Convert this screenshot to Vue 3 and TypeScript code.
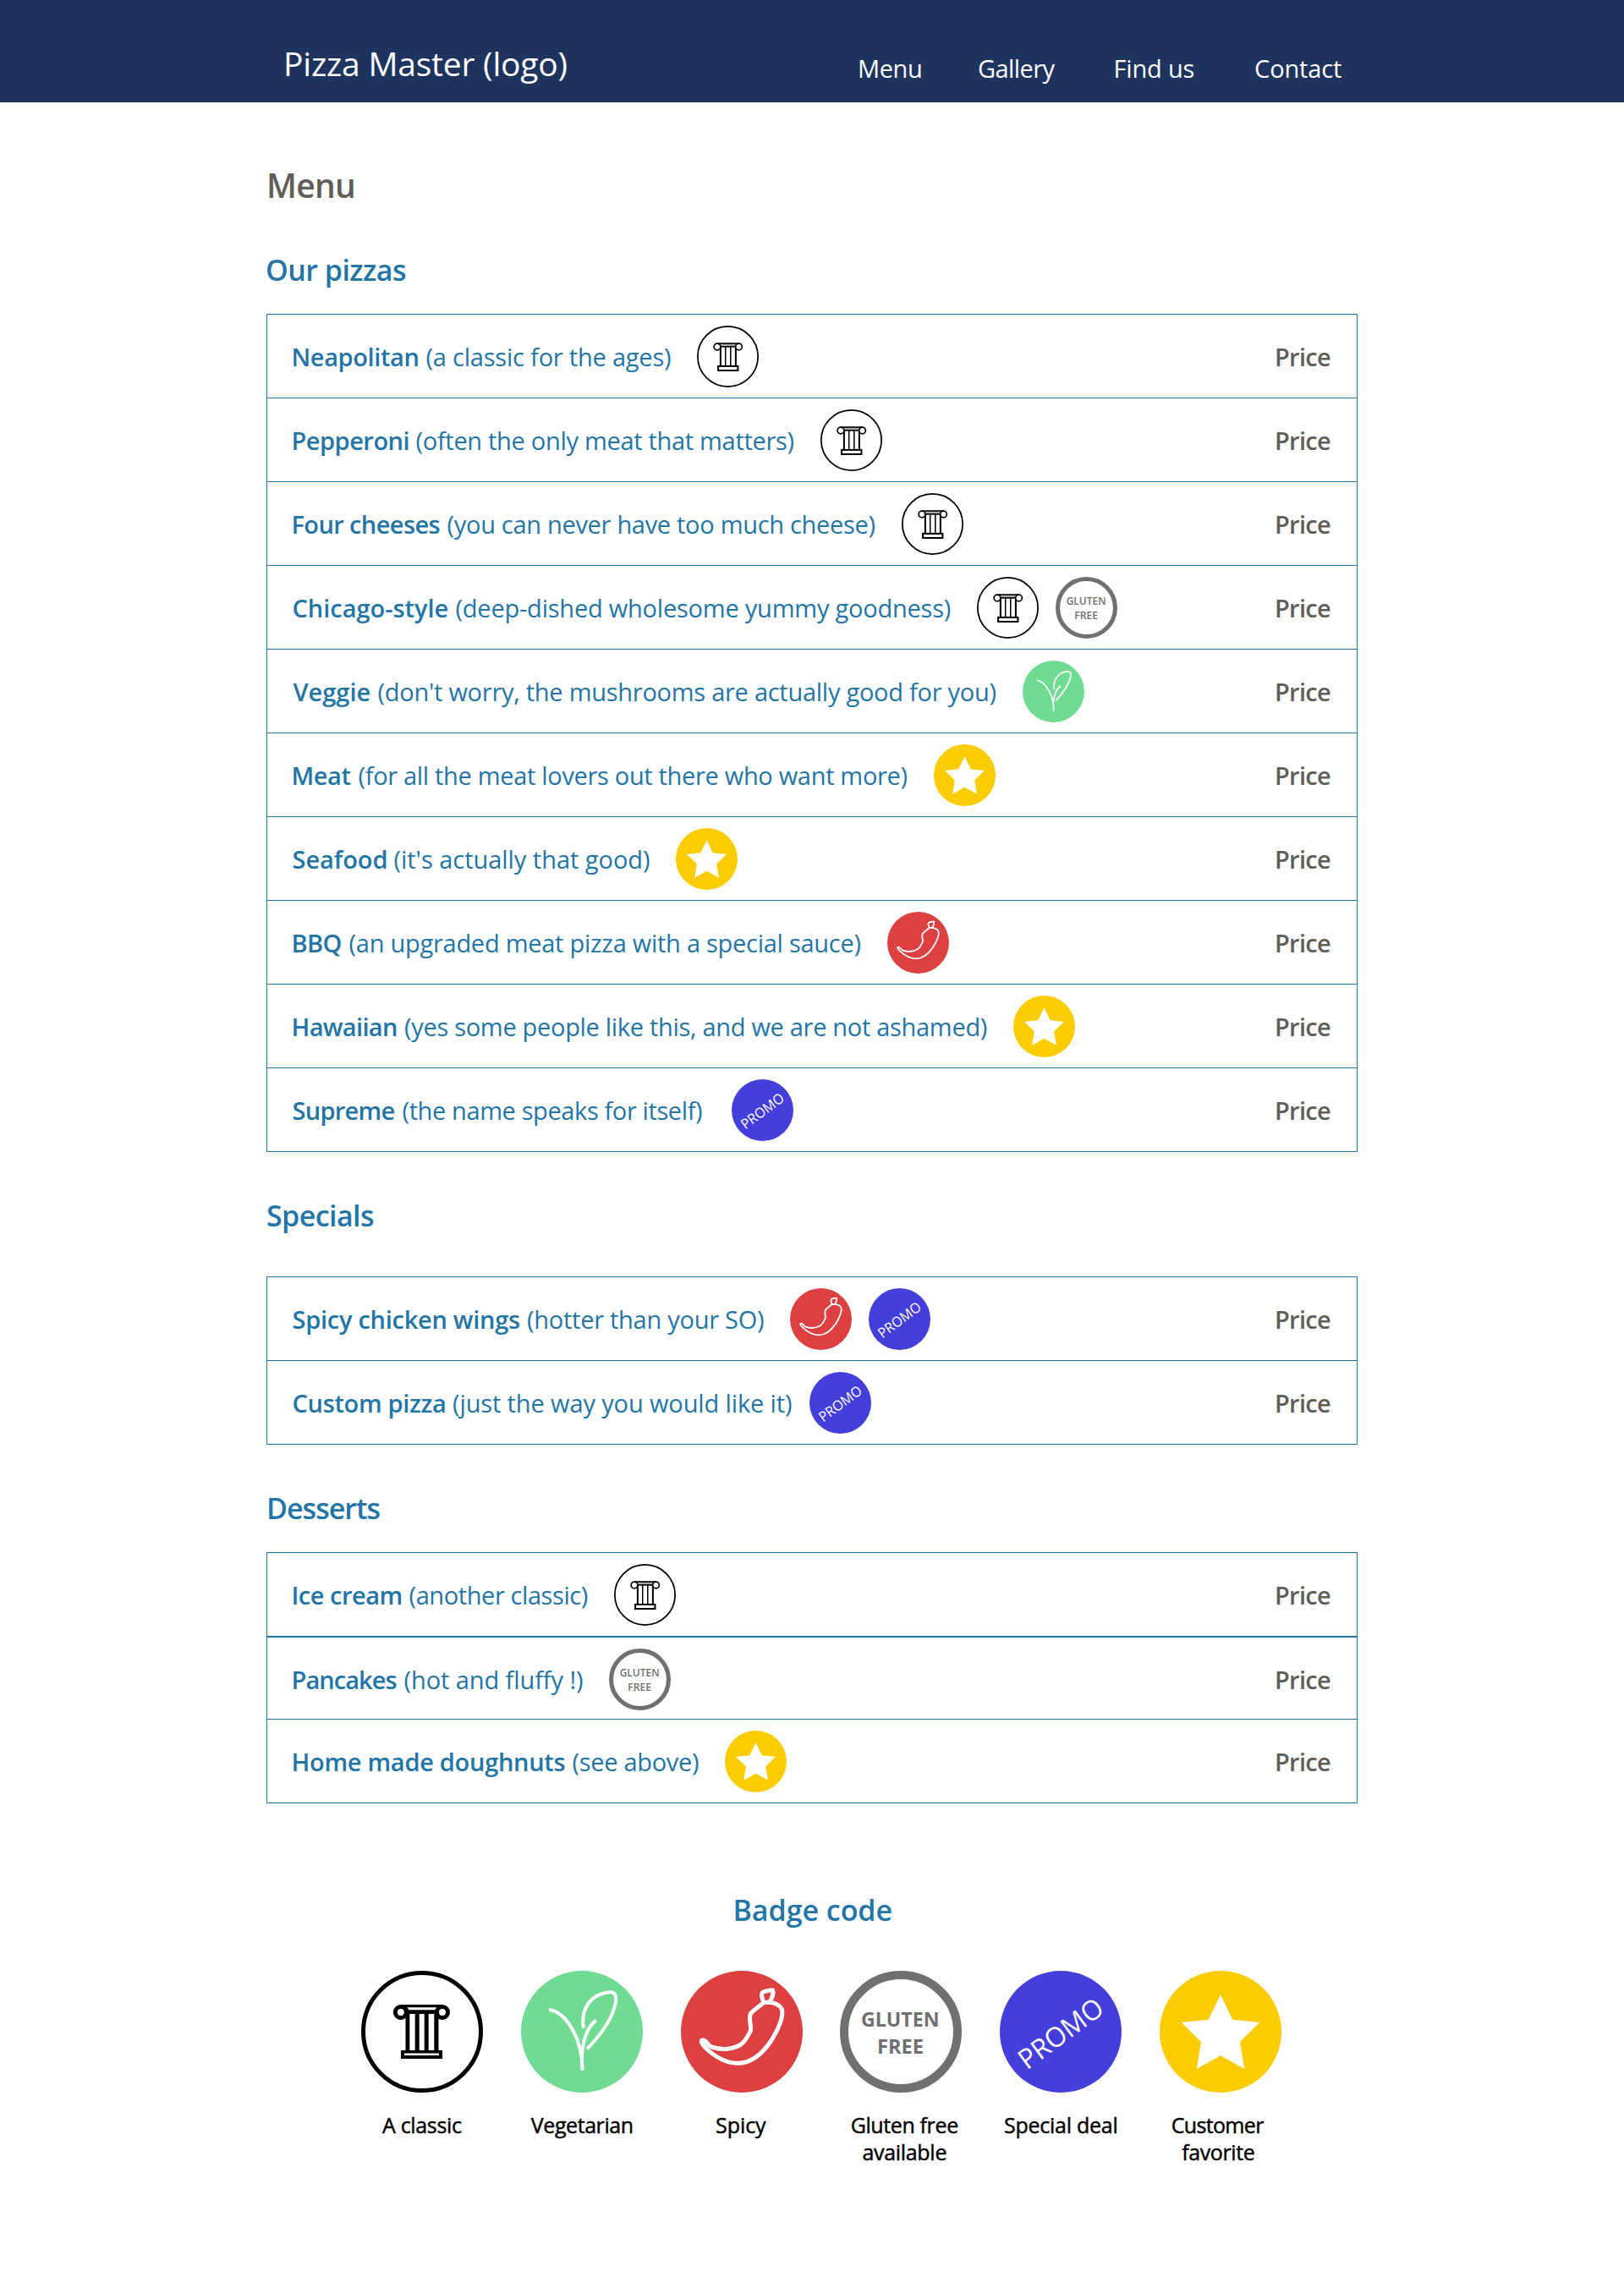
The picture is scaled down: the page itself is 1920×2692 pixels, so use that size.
<script setup lang="ts">
import { defineComponent, h } from 'vue'
import type { Directive, VNode } from 'vue'

type BadgeKind = 'classic' | 'veg' | 'spicy' | 'gluten' | 'promo' | 'star'

interface Dish {
  name: string
  note: string
  nameWidth: number
  noteWidth: number
  badges: BadgeKind[]
  gap?: number
}

interface Section {
  id: string
  title: string
  titleWidth: number
  dishes: Dish[]
}

/* Tracks a single line of text so that its visible glyphs span exactly the given width. */
const vFit: Directive<HTMLElement, number> = {
  mounted(el, binding) {
    const cs = getComputedStyle(el)
    const ctx = document.createElement('canvas').getContext('2d')
    const text = (el.textContent ?? '').trim()
    if (!ctx || text.length < 2) return
    ctx.font = `${cs.fontWeight} ${cs.fontSize} ${cs.fontFamily}`
    const m = ctx.measureText(text)
    const ink = m.actualBoundingBoxLeft + m.actualBoundingBoxRight
    const spacing = (binding.value - ink) / (text.length - 1)
    const trailing = m.width - m.actualBoundingBoxRight + spacing
    el.style.letterSpacing = `${spacing}px`
    el.style.marginLeft = `${m.actualBoundingBoxLeft}px`
    el.style.marginRight = `${-trailing}px`
  },
}

const nav = [
  { label: 'Menu', width: 73 },
  { label: 'Gallery', width: 90.5 },
  { label: 'Find us', width: 93 },
  { label: 'Contact', width: 102 },
]

const sections: Section[] = [
  {
    id: 'pizzas',
    title: 'Our pizzas',
    titleWidth: 164,
    dishes: [
      { name: 'Neapolitan', note: '(a classic for the ages)', nameWidth: 148, noteWidth: 288.5, badges: ['classic'] },
      { name: 'Pepperoni', note: '(often the only meat that matters)', nameWidth: 136, noteWidth: 446, badges: ['classic'] },
      { name: 'Four cheeses', note: '(you can never have too much cheese)', nameWidth: 173, noteWidth: 505, badges: ['classic'] },
      { name: 'Chicago-style', note: '(deep-dished wholesome yummy goodness)', nameWidth: 183, noteWidth: 584.3, badges: ['classic', 'gluten'] },
      { name: 'Veggie', note: "(don't worry, the mushrooms are actually good for you)", nameWidth: 91, noteWidth: 730, badges: ['veg'] },
      { name: 'Meat', note: '(for all the meat lovers out there who want more)', nameWidth: 68, noteWidth: 648, badges: ['star'] },
      { name: 'Seafood', note: "(it's actually that good)", nameWidth: 110, noteWidth: 301.5, badges: ['star'] },
      { name: 'BBQ', note: '(an upgraded meat pizza with a special sauce)', nameWidth: 57, noteWidth: 604, badges: ['spicy'] },
      { name: 'Hawaiian', note: '(yes some people like this, and we are not ashamed)', nameWidth: 122.5, noteWidth: 687.8, badges: ['star'] },
      { name: 'Supreme', note: '(the name speaks for itself)', nameWidth: 120, noteWidth: 353.5, badges: ['promo'], gap: 34.5 },
    ],
  },
  {
    id: 'specials',
    title: 'Specials',
    titleWidth: 126,
    dishes: [
      { name: 'Spicy chicken wings', note: '(hotter than your SO)', nameWidth: 267.5, noteWidth: 279, badges: ['spicy', 'promo'] },
      { name: 'Custom pizza', note: '(just the way you would like it)', nameWidth: 179.5, noteWidth: 400, badges: ['promo'], gap: 20.5 },
    ],
  },
  {
    id: 'desserts',
    title: 'Desserts',
    titleWidth: 131.5,
    dishes: [
      { name: 'Ice cream', note: '(another classic)', nameWidth: 128, noteWidth: 210.3, badges: ['classic'] },
      { name: 'Pancakes', note: '(hot and fluffy !)', nameWidth: 122, noteWidth: 210.5, badges: ['gluten'] },
      { name: 'Home made doughnuts', note: '(see above)', nameWidth: 321, noteWidth: 148.5, badges: ['star'] },
    ],
  },
]

const legend: { kind: BadgeKind; lines: { text: string; width: number }[] }[] = [
  { kind: 'classic', lines: [{ text: 'A classic', width: 94 }] },
  { kind: 'veg', lines: [{ text: 'Vegetarian', width: 120 }] },
  { kind: 'spicy', lines: [{ text: 'Spicy', width: 59 }] },
  { kind: 'gluten', lines: [{ text: 'Gluten free', width: 125.5 }, { text: 'available', width: 98 }] },
  { kind: 'promo', lines: [{ text: 'Special deal', width: 132.5 }] },
  { kind: 'star', lines: [{ text: 'Customer', width: 108.5 }, { text: 'favorite', width: 85.5 }] },
]

const FONT = "'Open Sans', 'Noto Sans', sans-serif"

function disc(fill: string): VNode {
  return h('circle', { cx: 72, cy: 72, r: 72, fill })
}

function label(text: string, x: number, y: number, length: number, size: number, weight: number, fill: string, transform?: string): VNode {
  return h('text', {
    x, y, fill, transform,
    'font-family': FONT, 'font-size': size, 'font-weight': weight,
    textLength: length, lengthAdjust: 'spacingAndGlyphs',
  }, text)
}

function drawBadge(kind: BadgeKind, small: boolean): VNode[] {
  switch (kind) {
    case 'classic':
      return small
        ? [
            h('circle', { cx: 72, cy: 72, r: 70.3, fill: '#fff', stroke: '#000', 'stroke-width': 3.4 }),
            h('rect', { x: 49, y: 41.5, width: 48, height: 7.5, fill: '#aaa', stroke: '#000', 'stroke-width': 3.2 }),
            h('path', { d: 'M55 49V94M90.500 49V94', stroke: '#000', 'stroke-width': 4 }),
            h('path', { d: 'M66.500 49V94M78.500 49V94', stroke: '#000', 'stroke-width': 3 }),
            h('rect', { x: 49.500, y: 94.500, width: 46, height: 10, fill: '#fff', stroke: '#000', 'stroke-width': 4 }),
            h('circle', { cx: 47.3, cy: 49.3, r: 7.6, fill: '#fff', stroke: '#000', 'stroke-width': 3.4 }),
            h('circle', { cx: 97.700, cy: 49.3, r: 7.6, fill: '#fff', stroke: '#000', 'stroke-width': 3.4 }),
          ]
        : [
            h('circle', { cx: 72, cy: 72, r: 69.5, fill: '#fff', stroke: '#000', 'stroke-width': 5 }),
            h('path', { d: 'M48 40H95V51H91.500V94H52.500V51H48Z', fill: '#000' }),
            h('path', { d: 'M54.500 43.300H89.500L87.500 46.200H56.500ZM57.300 51H63.700V94H57.300ZM68.700 51H74.700V94H68.700ZM79.700 51H86.300V94H79.700Z', fill: '#fff' }),
            h('rect', { x: 47, y: 94, width: 49, height: 10, fill: '#000' }),
            h('rect', { x: 51, y: 97.5, width: 41, height: 2.5, fill: '#fff' }),
            h('circle', { cx: 46.8, cy: 49, r: 6.5, fill: '#fff', stroke: '#000', 'stroke-width': 5 }),
            h('circle', { cx: 96, cy: 49, r: 6.5, fill: '#fff', stroke: '#000', 'stroke-width': 5 }),
          ]
    case 'veg':
      return [
        disc('#6fdb93'),
        h('path', {
          d: 'M33.300 45.700C55 50 73 82 72.500 117.700M88.700 58.700C74 70 70.500 94 72.500 117.700M73.700 67.700C70.500 43 83 28 104 25.300C111 24.500 113.500 29 111.800 38C108 57 92 78 78 92.500',
          fill: 'none', stroke: '#fff', 'stroke-width': small ? 3.3 : 4,
        }),
      ]
    case 'spicy':
      return [
        disc('#dc4041'),
        h('path', {
          d: 'M98 37.500C108 36.500 116 39 119.500 45.500C121.500 56 114 71 106.500 83C97 97 83 109.500 66.700 109.300C50 109 37 98.500 29.500 91.500C24 86 23 82 25.500 82C31 81 29.500 88 38 90.500C49 94 62 92.500 70.500 87.500C76 83.500 80 76 82.500 70.500C83.500 63 79.500 57 82.500 50.500C86 46.500 92 42.500 98 37.500ZM97.800 37.500C96.500 33 94 28 96.500 25.500C100 23.500 105 23.300 108.500 22.700C110.500 28 107.500 32 104.500 37.500',
          fill: 'none', stroke: '#fff', 'stroke-width': small ? 3.5 : 5, 'stroke-linejoin': 'round',
        }),
      ]
    case 'gluten':
      return [
        h('circle', { cx: 72, cy: 72, r: 67, fill: '#fff', stroke: '#707070', 'stroke-width': 10 }),
        label('GLUTEN', 25, 65.7, 92.5, 23.5, small ? 600 : 700, '#707070'),
        label('FREE', 44, 97.7, 55, 23.5, small ? 600 : 700, '#707070'),
      ]
    case 'promo':
      return [
        disc('#443edb'),
        label('PROMO', 13.500, 84.300, 116, 32.500, 400, '#fff', 'rotate(-36.5 73.5 72.700)'),
      ]
    default:
      return [
        disc('#fbcc00'),
        h('path', { d: 'M72 28.300L86.300 57.700L118.200 61L95 84L100.300 116L72 100.300L43.700 116L49 84L25.700 61L57.700 57.700Z', fill: '#fff' }),
      ]
  }
}

const BadgeIcon = defineComponent({
  props: { kind: { type: String, required: true }, small: { type: Boolean, default: false } },
  setup(props) {
    return () => h('svg', { viewBox: '0 0 144 144' }, drawBadge(props.kind as BadgeKind, props.small))
  },
})
</script>

<template>
  <div class="page">
    <header class="header">
      <div class="header-inner">
        <div class="logo"><span v-fit="331.5" class="fit">Pizza Master (logo)</span></div>
        <nav class="nav">
          <a v-for="item in nav" :key="item.label"><span v-fit="item.width" class="fit">{{ item.label }}</span></a>
        </nav>
      </div>
    </header>

    <main class="content">
      <h1 class="page-title"><span v-fit="100" class="fit">Menu</span></h1>

      <section v-for="section in sections" :key="section.id" :class="['section', section.id]">
        <h2 class="section-title"><span v-fit="section.titleWidth" class="fit">{{ section.title }}</span></h2>
        <ul class="list">
          <li v-for="dish in section.dishes" :key="dish.name" class="row">
            <span class="name"><span v-fit="dish.nameWidth" class="fit">{{ dish.name }}</span></span>
            <span class="note"><span v-fit="dish.noteWidth" class="fit">{{ dish.note }}</span></span>
            <span class="badges" :style="{ marginLeft: (dish.gap ?? 31) + 'px' }">
              <BadgeIcon v-for="badge in dish.badges" :key="badge" :class="['badge', badge]" :kind="badge" small />
            </span>
            <span class="price"><span v-fit="64" class="fit">Price</span></span>
          </li>
        </ul>
      </section>

      <section class="legend">
        <h2 class="section-title legend-title"><span v-fit="184" class="fit">Badge code</span></h2>
        <div class="legend-grid">
          <div v-for="entry in legend" :key="entry.kind" :class="['legend-item', 'legend-' + entry.kind]">
            <BadgeIcon class="legend-badge" :kind="entry.kind" />
            <div class="legend-label">
              <div v-for="line in entry.lines" :key="line.text"><span v-fit="line.width" class="fit">{{ line.text }}</span></div>
            </div>
          </div>
        </div>
      </section>
    </main>
  </div>
</template>

<style>
body {
  margin: 0;
  background: #fff;
}
</style>

<style scoped>
.page {
  min-height: 2692px;
  font-family: 'Open Sans', 'Noto Sans', sans-serif;
  font-size: 29px;
  color: #000;
}
.fit {
  display: inline-block;
  white-space: nowrap;
}
.header {
  height: 121px;
  background: #1e345f;
  color: #fff;
}
.header-inner {
  display: flex;
  justify-content: space-between;
  padding: 45px 334px 0 338px;
}
.logo {
  font-size: 39px;
  line-height: 60px;
}
.nav {
  display: grid;
  grid-template-columns: 141px 161.5px 165.5px 102px;
  margin-top: 16px;
  width: 570px;
  line-height: 40px;
}
.content {
  width: 1290px;
  margin: 0 auto;
}
.page-title {
  margin: 0;
  padding: 68px 0 0 3px;
  font-size: 39px;
  font-weight: 600;
  line-height: 60px;
  color: #605e59;
}
.section-title {
  margin: 0;
  padding-left: 1px;
  font-size: 34px;
  font-weight: 600;
  line-height: 50px;
  color: #2375a7;
}
.section {
  padding-top: 50px;
}
.pizzas {
  padding-top: 45px;
}
.desserts .section-title {
  padding-left: 3px;
}
.list {
  box-sizing: border-box;
  margin: 27px 0 0;
  padding: 0;
  list-style: none;
  border: 1px solid #2375a7;
  border-top: 0;
}
.specials .list {
  margin-top: 47px;
}
.row {
  box-sizing: border-box;
  display: flex;
  align-items: flex-start;
  height: 99px;
  padding: 0 31px 0 30.5px;
  border-top: 1px solid #2375a7;
  line-height: 100px;
  color: #2375a7;
}
.desserts .row:nth-child(1) {
  height: 100px;
  border-bottom: 1px solid #2375a7;
}
.desserts .row:nth-child(2) {
  height: 97px;
}
.name {
  font-weight: 600;
}
.note {
  margin-left: 10px;
}
.badges {
  display: flex;
  gap: 20px;
  padding-top: 13px;
}
.badge {
  display: block;
  width: 73px;
  height: 73px;
}
.price {
  margin-left: auto;
  font-weight: 600;
  color: #605e59;
}
.legend {
  padding-top: 101px;
}
.legend-title {
  padding: 0 0 0 3px;
  text-align: center;
}
.legend-grid {
  display: flex;
  gap: 44.8px;
  margin: 47px 0 0 112px;
}
.legend-item {
  width: 144px;
}
.legend-badge {
  display: block;
  width: 144px;
  height: 144px;
}
.legend-label {
  margin-top: 22px;
  font-size: 25px;
  -webkit-text-stroke: 0.45px #000;
  line-height: 32px;
  text-align: center;
}
.legend-gluten .legend-label {
  padding-left: 8px;
}
.legend-star .legend-label {
  padding-right: 6px;
}
</style>
